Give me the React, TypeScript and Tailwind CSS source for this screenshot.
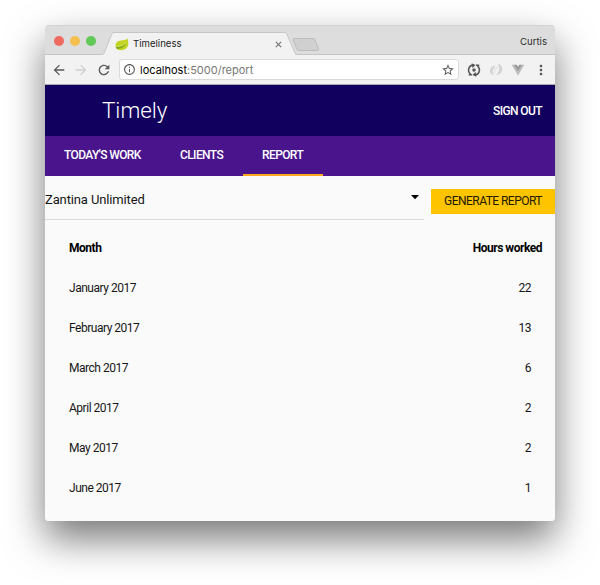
import React from "react";
import { MdArrowBack, MdArrowForward, MdRefresh, MdInfoOutline, MdStarBorder, MdMoreVert } from "react-icons/md";

const rows = [
  { month: "January 2017", hours: 22 },
  { month: "February 2017", hours: 13 },
  { month: "March 2017", hours: 6 },
  { month: "April 2017", hours: 2 },
  { month: "May 2017", hours: 2 },
  { month: "June 2017", hours: 1 },
];

function LeafIcon() {
  return (
    <svg width="14" height="13" viewBox="0 0 14 13" className="shrink-0">
      <path d="M12.4 .5C11 2 8.8 2.2 6 2.4 2.6 2.8 .5 4.4 .6 7.8c.1 3 2 4.4 5 4.4 5 0 7.800-3 7.700-7C13.300 3.500 12.900 1.700 12.400.5Z" fill="#c3d420" />
      <path d="M.6 8.300C5 9 9.500 7.500 11.700 4.200 10.500 8.800 6 11.100 1.900 10.900 1 10.100.6 9.200.6 8.300Z" fill="#86ab1a" />
      <path d="M1.100 8.500C5.500 8.700 9.500 7 11.700 4" stroke="#e6ee8c" strokeWidth=".6" fill="none" />
    </svg>
  );
}

function SyncIcon() {
  return (
    <svg width="14" height="14" viewBox="0 0 14 14" fill="none" stroke="#555" strokeWidth="1.500">
      <path d="M3.600 11.200A5.200 5.200 0 0 1 5.600 2" />
      <path d="M10.400 2.800A5.200 5.200 0 0 1 8.400 12" />
      <path d="M4.600 .3 8.600 2.100 5.400 4.900Z" fill="#555" stroke="none" />
      <path d="M9.400 13.700 5.400 11.900 8.600 9.100Z" fill="#555" stroke="none" />
      <path d="M9 2.200H12.200M1.800 11.800H5" />
      <circle cx="7" cy="7" r="1.700" fill="#555" stroke="none" />
    </svg>
  );
}

function SwirlIcon() {
  return (
    <svg width="14" height="14" viewBox="0 0 14 14" fill="#d2d2d2">
      <path d="M6.500 2.900C2.500 2.500-.1 6.200 1.400 9.800c.7 1.500 1.900 2.500 3.400 2.900C3 10.200 3 6.100 6.500 2.900Z" />
      <path d="M8.500 1.100c4.300.5 5.900 4.600 4 8-1.200 1.900-3.200 2.800-5.500 2.500C10.700 9.300 11.400 4.800 8.500 1.100Z" />
      <path d="M8.800 2.900 5.600 5.400 4.700 10.100 5.800 10.500 6.600 6.500 9.400 4.300Z" fill="#e2e2e2" />
    </svg>
  );
}

function VueIcon() {
  return (
    <svg width="14" height="12" viewBox="0 0 14 12">
      <path d="M.7.7H4L7 5.600 10 .7h3.300L7 11.400Z" fill="#bcbcbc" />
      <path d="M3.200.7h2.500L7 2.800 8.300.7h2.500L7 7.300Z" fill="#999" />
    </svg>
  );
}

function TabStrip() {
  return (
    <div className="flex h-[30px] border-b border-t border-b-[#c5c5c5] border-t-[#d2d2d2] bg-[#dddddd] pl-[9px] pr-2">
      <div className="flex gap-[6px] pt-[10px]">
        <span className="size-[10px] rounded-full bg-[#ef6a5f]" />
        <span className="size-[10px] rounded-full bg-[#f5be50]" />
        <span className="size-[10px] rounded-full bg-[#62c856]" />
      </div>
      <div className="relative ml-[6px] h-[30px] w-[194px] shrink-0">
        <svg className="absolute inset-0" width="194" height="30" viewBox="0 0 194 30">
          <path d="M0 28.500Q1.500 28.500 2.200 27L9.800 8Q10.300 6.500 12 6.500H182.500Q184.200 6.500 185 8.300L193 27Q193.500 28.500 194 28.500V30H0Z" fill="#f2f2f2" />
          <path d="M0 28.500Q1.500 28.500 2.200 27L9.800 8Q10.300 6.500 12 6.500H182.500Q184.200 6.500 185 8.300L193 27Q193.500 28.500 194 28.500" fill="none" stroke="#c6c6c6" />
        </svg>
        <div className="relative flex h-full items-center pt-[6px] pl-[13px] pr-[14px]">
          <LeafIcon />
          <span className="ml-[4px] font-['Inter','Roboto',sans-serif] text-[9.6px] leading-none text-[#222]">Timeliness</span>
          <svg className="ml-auto" width="7" height="7" viewBox="0 0 7 7" stroke="#707070" strokeWidth="1.100">
            <path d="M.8.8 6.200 6.200M6.200.8.8 6.200" />
          </svg>
        </div>
      </div>
      <svg className="mt-[11px] -ml-[4px]" width="28" height="15" viewBox="0 0 28 15">
        <path d="M2.200 1.500H21Q22.500 1.500 23.200 3L26.500 11.700Q27 13.500 25.500 13.500H7Q5.400 13.500 4.700 12L1.200 3Q.7 1.500 2.200 1.500Z" fill="#d0d0d0" stroke="#bdbdbd" />
      </svg>
      <span className="ml-auto pt-[10px] font-['Inter','Roboto',sans-serif] text-[9.6px] leading-[12px] text-[#2d2d2d]">Curtis</span>
    </div>
  );
}

function Toolbar() {
  return (
    <div className="flex h-[30px] items-center border-b border-[#aaa9b5] bg-[#f2f2f2] pl-[6px] pr-[6px]">
      <MdArrowBack size={16} className="text-[#5a5a5a]" />
      <MdArrowForward size={16} className="ml-[6px] text-[#cfcfcf]" />
      <MdRefresh size={16} className="ml-[7px] text-[#5a5a5a]" />
      <div className="ml-[7px] flex h-[21px] w-[340px] items-center rounded-[3px] border border-[#dadada] bg-white pl-[3px] pr-[3px]">
        <MdInfoOutline size={13} className="text-[#5a5a5a]" />
        <span className="ml-[4px] pt-px font-['Inter','Roboto',sans-serif] text-[11px] leading-none text-[#777]">
          <span className="text-black">localhost</span>:5000/report
        </span>
        <MdStarBorder size={14} className="ml-auto text-[#555]" />
      </div>
      <div className="ml-[8px] flex flex-1 items-center justify-between">
        <SyncIcon />
        <SwirlIcon />
        <VueIcon />
        <MdMoreVert size={16} className="text-[#555]" />
      </div>
    </div>
  );
}

function Report() {
  return (
    <div className="font-['Roboto',sans-serif]">
      <header className="flex h-[51px] items-center justify-between bg-[#12005e] pl-[57px] pr-[13px] text-white">
        <h1 className="text-[22.4px] font-light leading-none">Timely</h1>
        <span className="text-[12px] font-medium tracking-[-0.05em]">SIGN OUT</span>
      </header>
      <nav className="flex h-[40px] bg-[#4a148c] text-[12px] font-medium leading-[39px] tracking-[-0.05em] text-white">
        <span className="w-[116px] pl-[19px]">TODAY'S WORK</span>
        <span className="w-[82px] pl-[19px]">CLIENTS</span>
        <span className="w-[80px] border-b-2 border-[#ffa81f] pl-[19px]">REPORT</span>
      </nav>
      <div className="flex justify-between">
        <div className="flex h-[44px] w-[379px] justify-between border-b border-[#d8d8d8] pr-[5px]">
          <span className="pt-[15px] text-[13px] leading-[18px] tracking-[-0.01em] text-[#161616]">Zantina Unlimited</span>
          <svg className="mt-[19px]" width="8" height="5" viewBox="0 0 8 5"><path d="M0 0H8L4 4.300Z" fill="#000" /></svg>
        </div>
        <button className="mt-[13px] h-[25px] w-[124px] bg-[#ffc400] text-[12px] leading-[25px] tracking-[-0.045em] text-[#211900]">GENERATE REPORT</button>
      </div>
      <table className="mt-2 w-full text-[12px] tracking-[-0.04em] text-[#161616]">
        <thead>
          <tr className="h-10 text-black">
            <th className="pl-6 text-left font-bold">Month</th>
            <th className="pr-[13px] text-right font-bold">Hours worked</th>
          </tr>
        </thead>
        <tbody>
          {rows.map((r) => (
            <tr key={r.month} className="h-10">
              <td className="pl-6">{r.month}</td>
              <td className="pr-6 text-right">{r.hours}</td>
            </tr>
          ))}
        </tbody>
      </table>
    </div>
  );
}

export default function App() {
  return (
    <div className="h-[585px] w-[600px] overflow-hidden bg-white pt-[25px] pl-[45px]">
      <div className="h-[496px] w-[510px] rounded-[4px] shadow-[0_18px_38px_rgba(0,0,0,0.53)]">
        <div className="h-full overflow-hidden rounded-[4px] bg-[#fafafa]">
          <TabStrip />
          <Toolbar />
          <Report />
        </div>
      </div>
    </div>
  );
}
